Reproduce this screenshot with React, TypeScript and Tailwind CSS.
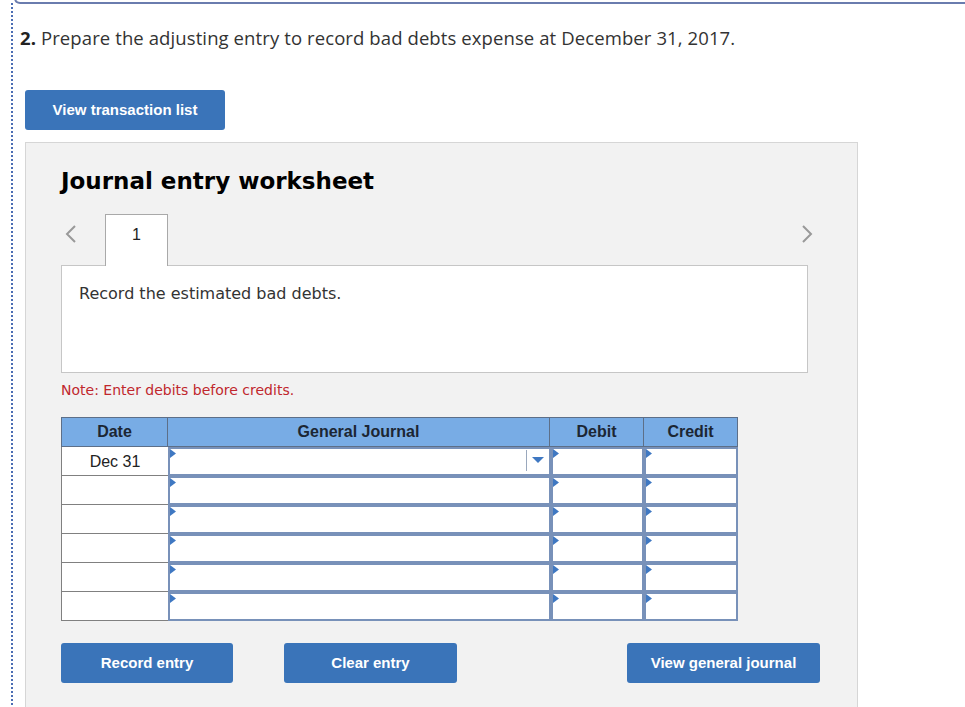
import React from "react";

const Tri = () => (
  <svg className="absolute left-0 top-0" width="6" height="9" viewBox="0 0 6 9">
    <polygon points="0,0 6,4.5 0,9" fill="#3f78c2" />
  </svg>
);

const Input = ({ w, dropdown }: { w: string; dropdown?: boolean }) => (
  <div className={`relative h-full ${w} border-2 border-[#7891b9] bg-white`}>
    <Tri />
    {dropdown && (
      <div className="absolute right-0 top-[1px] bottom-[3px] w-[23px] border-l border-[#9aa8bd] flex items-center justify-center">
        <svg width="12" height="7" viewBox="0 0 12 7">
          <polygon points="0,0 12,0 6,6" fill="#3f78c2" />
        </svg>
      </div>
    )}
  </div>
);

const Btn = ({ children, w }: { children: React.ReactNode; w: string }) => (
  <div
    className={`${w} h-[40px] bg-[#3a74b9] rounded-[3px] flex items-center justify-center text-white font-bold text-[15px]`}
    style={{ fontFamily: '"Liberation Sans", Arial, sans-serif' }}
  >
    {children}
  </div>
);

export default function App() {
  const rows = [0, 1, 2, 3, 4, 5];
  return (
    <div className="w-[965px] h-[707px] overflow-hidden bg-white">
      <div className="ml-[11px] h-full border-l-2 border-dotted border-[#4b6db3]">
        <div className="-mt-[2px] ml-[1px] h-[6px] border-b-2 border-l-2 border-[#6a7cae] rounded-bl-[8px]" />
        <p
          className="mt-[21px] ml-[7px] text-[18.5px] tracking-[0.1px] text-[#333] leading-[26px]"
          style={{ fontFamily: '"Open Sans", Lato, sans-serif' }}
        >
          <span className="font-bold text-[#222]">2.</span> Prepare the adjusting entry to record bad debts expense at December 31, 2017.
        </p>
        <div className="mt-[39px] ml-[12px]">
          <Btn w="w-[200px]">View transaction list</Btn>
        </div>
        <div className="mt-[12px] ml-[12px] w-[833px] h-[600px] bg-[#f2f2f2] border border-[#d6d6d6] pl-[35px]">
          <h1
            className="mt-[23px] text-[23px] font-bold text-black leading-[30px]"
            style={{ fontFamily: '"DejaVu Sans", Verdana, sans-serif' }}
          >
            Journal entry worksheet
          </h1>
          <div className="mt-[18px] w-[760px] h-[51px] flex items-end">
            <div className="w-[44px] h-full flex items-start pt-[11px] pl-[4px]">
              <svg width="12" height="18" viewBox="0 0 12 18">
                <polyline points="10,1 2,9 10,17" fill="none" stroke="#999" strokeWidth="2" />
              </svg>
            </div>
            <div
              className="relative z-10 -mb-[1px] w-[63px] h-[52px] bg-white border border-b-0 border-[#a9a9a9] flex justify-center pt-[8px] text-[16px] text-[#222]"
              style={{ fontFamily: '"Liberation Sans", Arial, sans-serif' }}
            >
              1
            </div>
            <div className="flex-1" />
            <div className="w-[20px] h-full flex items-start pt-[11px]">
              <svg width="12" height="18" viewBox="0 0 12 18">
                <polyline points="2,1 10,9 2,17" fill="none" stroke="#999" strokeWidth="2" />
              </svg>
            </div>
          </div>
          <div
            className="w-[747px] h-[108px] bg-white border border-[#c6c6c6] pl-[17px] pt-[16px] text-[16px] text-[#333]"
            style={{ fontFamily: '"DejaVu Sans", Verdana, sans-serif' }}
          >
            Record the estimated bad debts.
          </div>
          <p
            className="mt-[7px] text-[14px] text-[#c0272d] leading-[20px]"
            style={{ fontFamily: '"DejaVu Sans", Verdana, sans-serif' }}
          >
            Note: Enter debits before credits.
          </p>
          <div
            className="mt-[17px] w-[677px]"
            style={{ fontFamily: '"Liberation Sans", Arial, sans-serif' }}
          >
            <div className="flex h-[30px] bg-[#78ace5] border border-[#5d6f88] text-[16px] font-bold text-[#1c2633]">
              <div className="w-[106px] border-r border-[#5d6f88] flex items-center justify-center">Date</div>
              <div className="w-[382px] border-r border-[#5d6f88] flex items-center justify-center">General Journal</div>
              <div className="w-[94px] border-r border-[#5d6f88] flex items-center justify-center">Debit</div>
              <div className="flex-1 flex items-center justify-center">Credit</div>
            </div>
            {rows.map((r) => (
              <div key={r} className="flex h-[29px]">
                <div className="w-[107px] h-full bg-white border-l border-b border-[#808080] flex items-center justify-center pt-[2px] text-[16px] text-[#222]">
                  {r === 0 ? "Dec 31" : ""}
                </div>
                <Input w="w-[383px]" dropdown={r === 0} />
                <Input w="w-[93px]" />
                <Input w="w-[94px]" />
              </div>
            ))}
          </div>
          <div className="mt-[22px] w-[759px] flex">
            <Btn w="w-[172px]">Record entry</Btn>
            <div className="w-[51px]" />
            <Btn w="w-[173px]">Clear entry</Btn>
            <div className="flex-1" />
            <Btn w="w-[193px]">View general journal</Btn>
          </div>
        </div>
      </div>
    </div>
  );
}
